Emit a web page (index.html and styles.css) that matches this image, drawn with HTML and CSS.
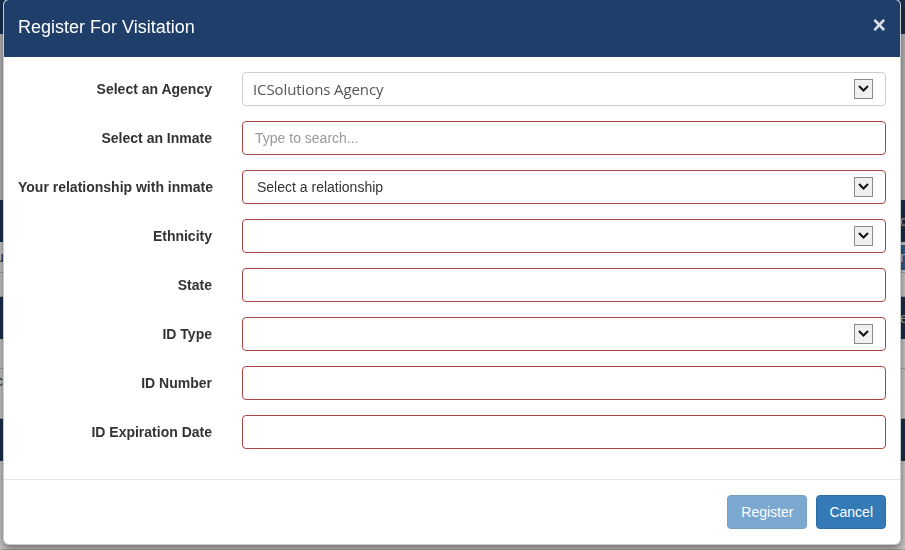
FILE: index.html
```html
<!DOCTYPE html>
<html>
<head>
<meta charset="utf-8">
<link rel="stylesheet" href="styles.css">
</head>
<body>
<div class="page">
  <div class="band navy top"></div>
  <div class="band grey tall"></div>
  <div class="band light short"></div>
  <div class="band navy mid"><span class="edge-l">&nbsp;</span><span class="edge-r">d</span></div>
  <div class="band light row"><span class="edge-l">u</span><span class="edge-r blue">n</span></div>
  <div class="band light gap"></div>
  <div class="band navy mid"><span class="edge-l">&nbsp;</span><span class="edge-r">e</span></div>
  <div class="band light row2"></div>
  <div class="band light row3"><span class="edge-l">c</span></div>
  <div class="band navy mid"></div>
  <div class="band light rest"></div>
</div>
<div class="backdrop"></div>
<div class="modal">
  <div class="modal-header">
    <h4 class="modal-title">Register For Visitation</h4>
    <span class="close">&times;</span>
  </div>
  <div class="modal-body">
    <div class="form-row">
      <label class="lbl">Select an Agency</label>
      <div class="field select ok"><span class="val agency">ICSolutions Agency</span><span class="arrow"><svg width="11" height="7" viewBox="0 0 11 7"><polyline points="1,1 5.5,5.5 10,1" fill="none" stroke="#111" stroke-width="2"/></svg></span></div>
    </div>
    <div class="form-row">
      <label class="lbl">Select an Inmate</label>
      <input class="field err" type="text" placeholder="Type to search...">
    </div>
    <div class="form-row">
      <label class="lbl">Your relationship with inmate</label>
      <div class="field select err"><span class="val">Select a relationship</span><span class="arrow"><svg width="11" height="7" viewBox="0 0 11 7"><polyline points="1,1 5.5,5.5 10,1" fill="none" stroke="#111" stroke-width="2"/></svg></span></div>
    </div>
    <div class="form-row">
      <label class="lbl">Ethnicity</label>
      <div class="field select err"><span class="val"></span><span class="arrow"><svg width="11" height="7" viewBox="0 0 11 7"><polyline points="1,1 5.5,5.5 10,1" fill="none" stroke="#111" stroke-width="2"/></svg></span></div>
    </div>
    <div class="form-row">
      <label class="lbl">State</label>
      <input class="field err" type="text">
    </div>
    <div class="form-row">
      <label class="lbl">ID Type</label>
      <div class="field select err"><span class="val"></span><span class="arrow"><svg width="11" height="7" viewBox="0 0 11 7"><polyline points="1,1 5.5,5.5 10,1" fill="none" stroke="#111" stroke-width="2"/></svg></span></div>
    </div>
    <div class="form-row">
      <label class="lbl">ID Number</label>
      <input class="field err" type="text">
    </div>
    <div class="form-row">
      <label class="lbl">ID Expiration Date</label>
      <input class="field err" type="text">
    </div>
  </div>
  <div class="modal-footer">
    <button class="btn btn-primary disabled reg">Register</button>
    <button class="btn btn-primary">Cancel</button>
  </div>
</div>
</body>
</html>
```
FILE: styles.css
```css
* { box-sizing: border-box; }
html, body { margin: 0; padding: 0; }
body {
  width: 905px;
  height: 550px;
  overflow: hidden;
  font-family: "Liberation Sans", Arial, sans-serif;
  font-size: 14px;
  color: #333;
  background: #fff;
}
.page { display: flex; flex-direction: column; height: 550px; }
.band { display: flex; justify-content: space-between; align-items: center; font-size: 14px; flex: none; }
.band.navy { background: #1f3d66; color: #e0d0c0; }
.band.grey { background: #e9e9e9; }
.band.light { background: #fff; border-bottom: 1px solid #ccc; }
.top { height: 34px; }
.tall { height: 166px; }
.short { height: 0; border-bottom: none !important; }
.mid { height: 42px; }
.row { height: 31px; }
.gap { height: 24px; }
.row2 { height: 30px; }
.row3 { height: 50px; align-items: flex-start; padding-top: 4px; }
.rest { flex: 1; }
.edge-l { margin-left: -4px; width: 8px; }
.edge-r { margin-right: -3px; width: 8px; text-align: left; }
.edge-r.blue { background: #337ab7; color: #fff; height: 25px; line-height: 25px; }

.backdrop {
  position: fixed;
  inset: 0;
  background: rgba(0, 0, 0, 0.22);
}
.modal {
  position: fixed;
  left: 3px;
  top: -1px;
  width: 898px;
  background: #fff;
  border: 1px solid rgba(0, 0, 0, 0.2);
  border-radius: 6px;
  box-shadow: 0 3px 9px rgba(0, 0, 0, 0.5);
  overflow: hidden;
}
.modal-header {
  background: #1f3e69;
  padding: 15px 14px;
  display: flex;
  justify-content: space-between;
  align-items: center;
  border-bottom: 1px solid #1f3e69;
}
.modal-title {
  margin: 0;
  font-size: 18px;
  font-weight: normal;
  line-height: 25.7px;
  color: #fff;
}
.close {
  font-size: 23px;
  font-weight: bold;
  line-height: 1;
  color: #d9e0e8;
  margin-top: -4px;
}
.modal-body { padding: 15px 14px; }
.form-row {
  display: grid;
  grid-template-columns: 194px 1fr;
  column-gap: 30px;
  margin-bottom: 15px;
}
.lbl {
  text-align: right;
  font-weight: bold;
  padding-top: 7px;
  line-height: 20px;
  white-space: nowrap;
}
.field {
  height: 34px;
  width: 100%;
  border-radius: 4px;
  border: 1px solid #ccc;
  background: #fff;
  font-family: "Liberation Sans", Arial, sans-serif;
  font-size: 14px;
  color: #333;
  padding: 6px 12px;
  outline: none;
}
.field.err { border-color: #a94442; }
.field::placeholder { color: #999; }
.select {
  display: flex;
  align-items: center;
  justify-content: space-between;
  padding: 0 12px 0 14px;
}
.val { white-space: nowrap; }
.val.agency {
  font-family: "Open Sans", sans-serif;
  font-size: 15px;
  color: #555;
  margin-left: -4px;
  letter-spacing: -0.1px;
}
.arrow {
  width: 19px;
  height: 20px;
  border: 1px solid #8a8a8a;
  background: #f0f0f0;
  display: flex;
  align-items: center;
  justify-content: center;
}
.arrow svg { display: block; }
.modal-footer {
  border-top: 1px solid #e5e5e5;
  padding: 15px 14px;
  display: flex;
  justify-content: flex-end;
  gap: 9px;
}
.btn {
  height: 34px;
  padding: 6px 12px;
  font-family: "Liberation Sans", Arial, sans-serif;
  font-size: 14px;
  line-height: 20px;
  border-radius: 4px;
  border: 1px solid #2e6da4;
  color: #fff;
  background: #337ab7;
}
.btn.reg { padding: 6px 13px; }
.btn.disabled { opacity: 0.65; }
```
